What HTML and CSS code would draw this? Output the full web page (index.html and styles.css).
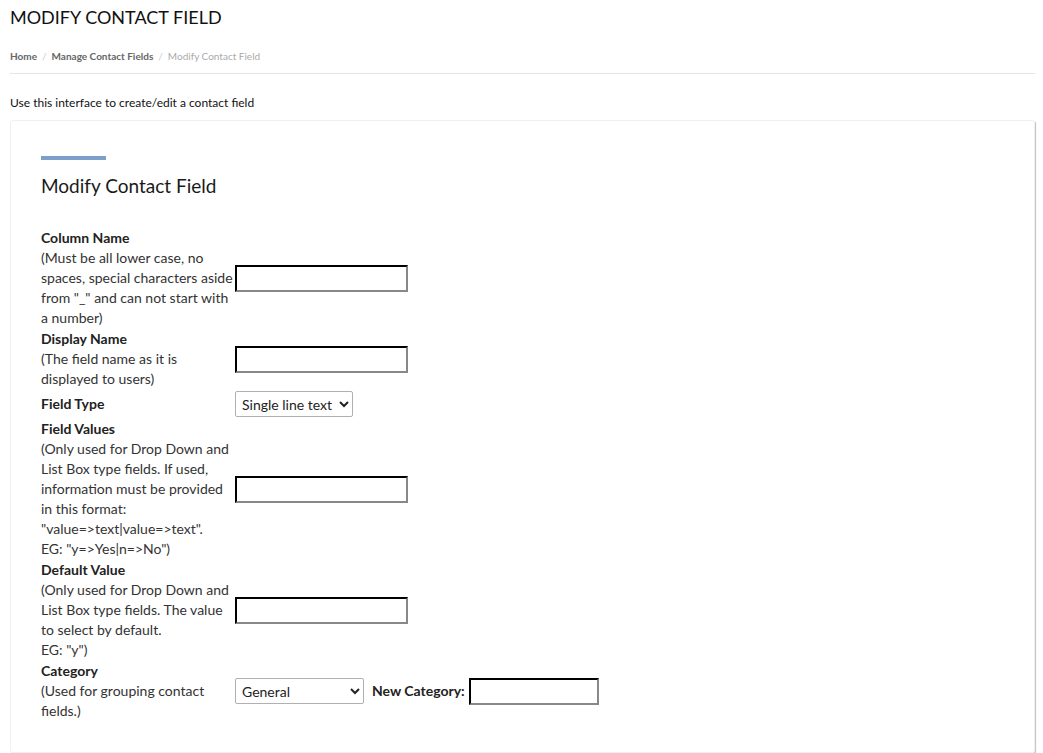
FILE: index.html
```html
<!DOCTYPE html>
<html>
<head>
<meta charset="utf-8">
<title>Modify Contact Field</title>
<link rel="stylesheet" href="styles.css">
</head>
<body>
<div class="page">
  <h1 class="page-title">MODIFY CONTACT FIELD</h1>
  <nav class="crumbs">
    <a class="crumb">Home</a><span class="sep">/</span><a class="crumb">Manage Contact Fields</a><span class="sep">/</span><span class="crumb-current">Modify Contact Field</span>
  </nav>
  <p class="intro">Use this interface to create/edit a contact field</p>
  <div class="card">
    <div class="accent"></div>
    <h2 class="card-title">Modify Contact Field</h2>
    <table class="form-table">
      <tr>
        <td class="lbl"><b>Column Name</b><br>(Must be all lower case, no spaces, special characters aside from "_" and can not start with a number)</td>
        <td class="fld"><input type="text" class="txt"></td>
      </tr>
      <tr>
        <td class="lbl"><b>Display Name</b><br>(The field name as it is displayed to users)</td>
        <td class="fld"><input type="text" class="txt"></td>
      </tr>
      <tr class="row-select">
        <td class="lbl"><b>Field Type</b></td>
        <td class="fld"><select class="sel sel-type"><option>Single line text</option></select></td>
      </tr>
      <tr>
        <td class="lbl"><b>Field Values</b><br>(Only used for Drop Down and List Box type fields. If used, information must be provided in this format: "value=&gt;text|value=&gt;text".<br>EG: "y=&gt;Yes|n=&gt;No")</td>
        <td class="fld"><input type="text" class="txt"></td>
      </tr>
      <tr>
        <td class="lbl"><b>Default Value</b><br>(Only used for Drop Down and List Box type fields. The value to select by default.<br>EG: "y")</td>
        <td class="fld"><input type="text" class="txt"></td>
      </tr>
      <tr>
        <td class="lbl"><b>Category</b><br>(Used for grouping contact fields.)</td>
        <td class="fld"><div class="cat-row"><select class="sel sel-cat"><option>General</option></select><b class="newcat">New Category:</b><input type="text" class="txt txt-cat"></div></td>
      </tr>
    </table>
  </div>
</div>
</body>
</html>
```

FILE: styles.css
```css
html, body {
  margin: 0;
  padding: 0;
  background: #fff;
}
body {
  font-family: Lato, "Open Sans", Arial, sans-serif;
  color: #333;
}
.page {
  padding: 0 8px 0 10px;
}
.page-title {
  margin: 0;
  padding-top: 7px;
  font-size: 18px;
  font-weight: 400;
  line-height: 20px;
  color: #111;
}
.crumbs {
  margin-top: 22px;
  font-size: 10px;
  line-height: 14px;
  padding-bottom: 10px;
  border-bottom: 1px solid #e5e5e5;
}
.crumb {
  color: #666;
  font-weight: 700;
}
.crumb-current {
  color: #aaa;
}
.sep {
  color: #ccc;
  padding: 0 5px;
}
.intro {
  margin: 21px 0 0 0;
  font-size: 12px;
  line-height: 16px;
  color: #111;
}
.card {
  margin-top: 9px;
  border: 1px solid #f0f0f0;
  border-radius: 3px;
  box-shadow: 1px 1px 1px rgba(0,0,0,0.25);
  padding: 35px 30px 30px 30px;
}
.accent {
  width: 65px;
  height: 4px;
  background: #7f9fcb;
}
.card-title {
  margin: 14px 0 0 0;
  font-size: 19px;
  line-height: 24px;
  font-weight: 400;
  color: #1a1a1a;
}
.form-table {
  margin-top: 29px;
  border-collapse: separate;
  border-spacing: 0 1px;
  font-size: 14px;
  line-height: 20px;
  color: #333;
}
.form-table td {
  padding: 0;
  vertical-align: middle;
}
.form-table .row-select td {
  padding: 1px 0;
}
.lbl {
  width: 194px;
}
.lbl b {
  color: #222;
}
.txt {
  width: 173px;
  height: 27px;
  box-sizing: border-box;
  border: 2px inset #767676;
  border-top-color: #222;
  border-left-color: #222;
  border-right-color: #888;
  border-bottom-color: #888;
  padding: 1px 2px;
  margin: 0;
  font-family: inherit;
  font-size: 13px;
  background: #fff;
}
.sel {
  height: 26px;
  box-sizing: border-box;
  border: 1px solid #b0b0b0;
  border-radius: 2px;
  background: #fff;
  font-family: Lato, sans-serif;
  font-size: 14px;
  color: #222;
  padding: 0 2px;
  margin: 0;
}
.sel-type {
  width: 118px;
}
.sel-cat {
  width: 129px;
}
.cat-row {
  display: flex;
  align-items: center;
}
.newcat {
  margin: 0 4px 0 8px;
  color: #222;
}
.txt-cat {
  width: 130px;
}
```
